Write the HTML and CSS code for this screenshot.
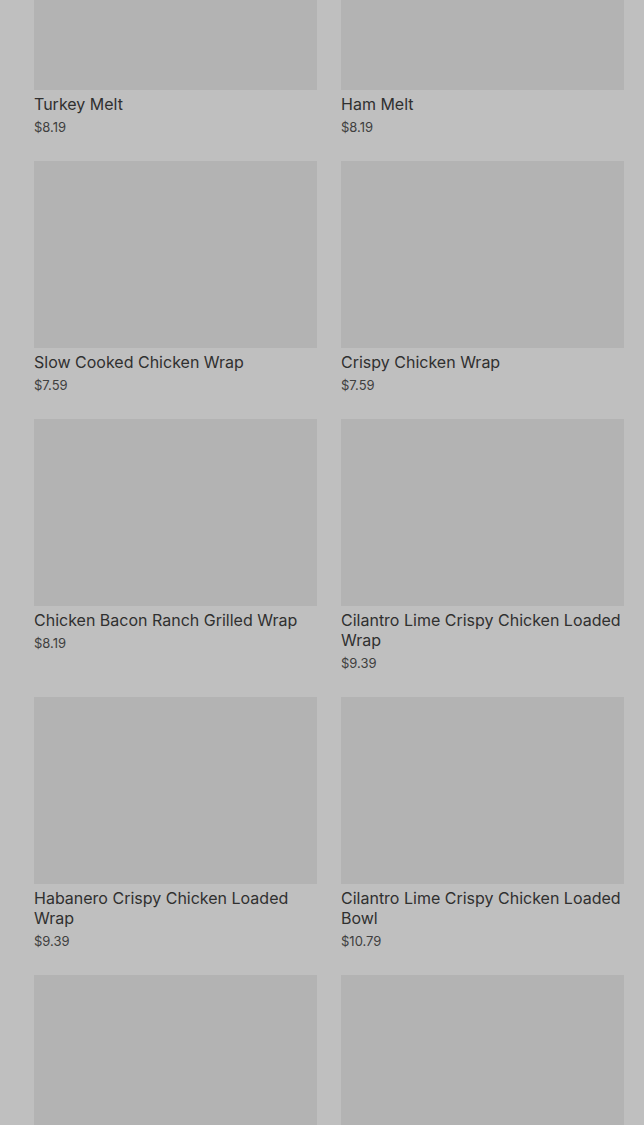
FILE: index.html
```html
<!DOCTYPE html>
<html>
<head>
<meta charset="utf-8">
<link rel="stylesheet" href="styles.css">
</head>
<body>
<div class="grid">
  <div class="card"><div class="img"></div><div class="title">Turkey Melt</div><div class="price">$8.19</div></div>
  <div class="card"><div class="img"></div><div class="title">Ham Melt</div><div class="price">$8.19</div></div>
  <div class="card"><div class="img"></div><div class="title">Slow Cooked Chicken Wrap</div><div class="price">$7.59</div></div>
  <div class="card"><div class="img"></div><div class="title">Crispy Chicken Wrap</div><div class="price">$7.59</div></div>
  <div class="card"><div class="img"></div><div class="title">Chicken Bacon Ranch Grilled Wrap</div><div class="price">$8.19</div></div>
  <div class="card"><div class="img"></div><div class="title">Cilantro Lime Crispy Chicken Loaded Wrap</div><div class="price">$9.39</div></div>
  <div class="card"><div class="img"></div><div class="title">Habanero Crispy Chicken Loaded Wrap</div><div class="price">$9.39</div></div>
  <div class="card"><div class="img"></div><div class="title">Cilantro Lime Crispy Chicken Loaded Bowl</div><div class="price">$10.79</div></div>
  <div class="card"><div class="img"></div></div>
  <div class="card"><div class="img"></div></div>
</div>
</body>
</html>
```
FILE: styles.css
```css
html, body {
  margin: 0;
  padding: 0;
  background: #bfbfbf;
  overflow: hidden;
}
body {
  font-family: Inter, Roboto, "Liberation Sans", sans-serif;
  height: 1125px;
}
.grid {
  display: grid;
  grid-template-columns: 283px 283px;
  column-gap: 24px;
  row-gap: 24px;
  padding: 0 20px 0 34px;
  margin-top: -97px;
  align-items: start;
}
.img {
  height: 187px;
  background: #b3b3b3;
}
.title {
  margin-top: 4px;
  font-size: 16px;
  line-height: 20px;
  font-weight: 400;
  color: #303030;
}
.price {
  margin-top: 4px;
  font-size: 13px;
  line-height: 19px;
  color: #404040;
}
```
